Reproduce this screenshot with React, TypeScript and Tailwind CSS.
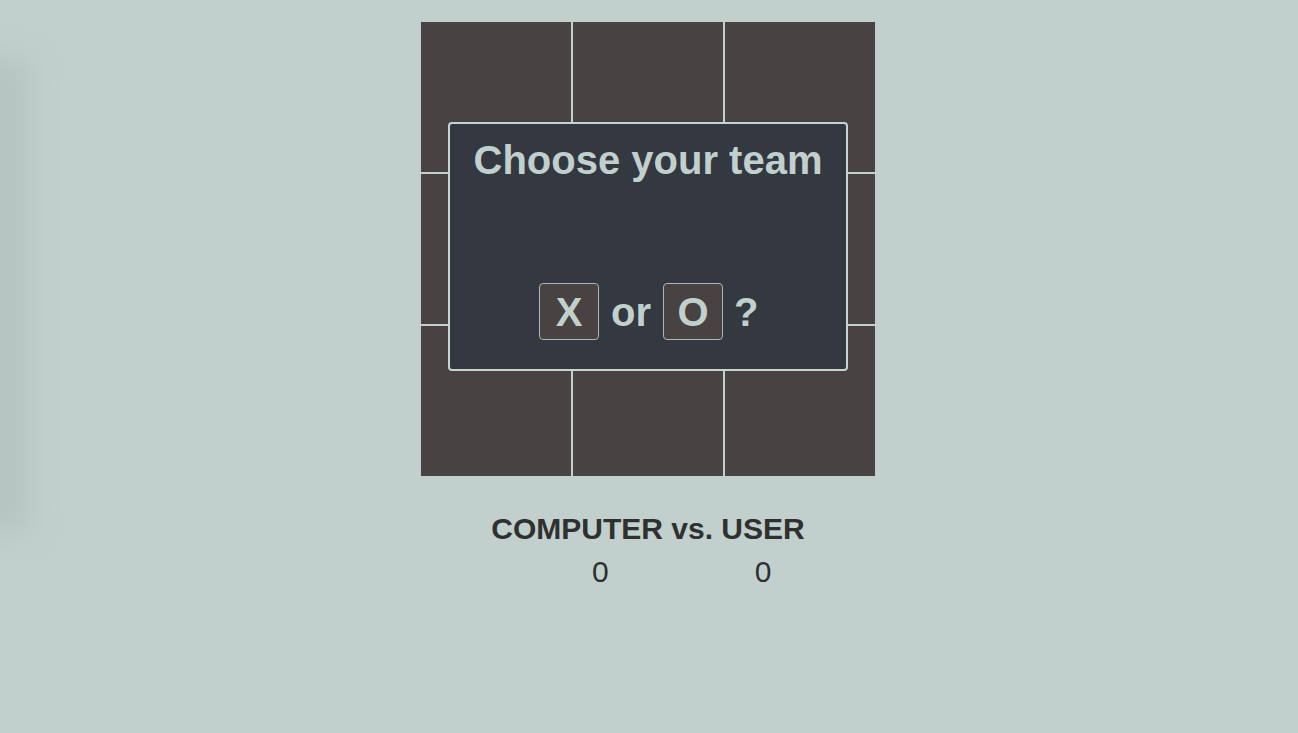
const cells = Array.from({ length: 9 }, (_, index) => index);

export default function App() {
  return (
    <div className="relative min-h-[733px] overflow-hidden bg-[#c1d0cd] font-['Liberation_Sans',Arial,sans-serif]">
      {/* faint shade down the left edge */}
      <div className="pointer-events-none absolute left-[-30px] top-[60px] h-[470px] w-[60px] bg-[#b4c4c1] blur-[14px]" />

      <div className="relative flex justify-center pr-[2px] pt-[22px]">
        <div className="w-[454px]">
          <div className="relative grid h-[454px] w-[454px] grid-cols-3 gap-[2px] bg-[#c1d0cd]">
            {cells.map((cell) => (
              <div className="bg-[#494242]" key={cell} />
            ))}

            <div className="absolute left-[27px] top-[100px] flex h-[249px] w-[400px] flex-col rounded-[4px] border-2 border-[#c5d4d0] bg-[#343841]">
              <h1 className="mt-[13px] text-center text-[40px] font-bold leading-[46px] text-[#c1d0cd]">
                Choose your team
              </h1>
              <div className="mt-[100px] flex items-center pl-[89px] text-[40px] font-bold leading-[46px] text-[#c1d0cd]">
                <button className="flex h-[57px] w-[60px] items-center justify-center rounded-[4px] border border-[#aab6b3] bg-[#494242]" type="button">
                  X
                </button>
                <span className="mx-[12px]">or</span>
                <button className="flex h-[57px] w-[60px] items-center justify-center rounded-[4px] border border-[#aab6b3] bg-[#494242]" type="button">
                  O
                </button>
                <span className="ml-[11px]">?</span>
              </div>
            </div>
          </div>

          <h2 className="mt-[36px] text-center text-[30px] font-bold leading-[34px] text-[#2f302f]">
            COMPUTER vs. USER
          </h2>
          <div className="mt-[9px] flex pl-[171px] text-[30px] leading-[34px] text-[#2f302f]">
            <span>0</span>
            <span className="ml-[146px]">0</span>
          </div>
        </div>
      </div>
    </div>
  );
}
